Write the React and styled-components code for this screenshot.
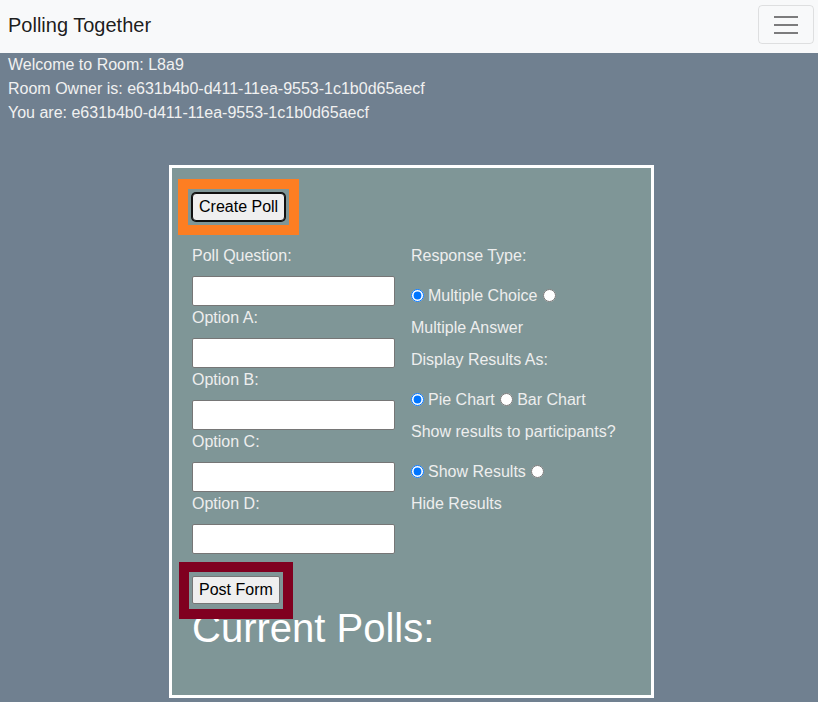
import React from 'react';
import styled, { createGlobalStyle } from 'styled-components';

const GlobalStyle = createGlobalStyle`
  body {
    margin: 0;
    background: #708090;
    font-family: "Liberation Sans", Arial, sans-serif;
    font-size: 16px;
  }
`;

const Navbar = styled.nav`
  display: flex;
  justify-content: space-between;
  align-items: flex-start;
  height: 53px;
  box-sizing: border-box;
  padding: 5px 4px 0 8px;
  background: #f8f9fa;
`;

const Brand = styled.div`
  font-size: 20px;
  line-height: 40px;
  color: rgba(0, 0, 0, 0.9);
`;

const Toggler = styled.button`
  display: flex;
  flex-direction: column;
  justify-content: center;
  gap: 6px;
  width: 56px;
  height: 39px;
  padding: 0 15px;
  background: transparent;
  border: 1px solid rgba(0, 0, 0, 0.1);
  border-radius: 4px;
`;

const TogglerBar = styled.span`
  display: block;
  height: 2px;
  background: rgba(0, 0, 0, 0.5);
`;

const RoomInfo = styled.div`
  padding: 0 8px;
  color: #f1f1f1;
  line-height: 24px;
`;

const Panel = styled.section`
  width: 485px;
  box-sizing: border-box;
  margin: 40px 0 0 169px;
  padding: 25px 20px 43px;
  background: #7f9697;
  border: 3px solid #ffffff;
`;

// the coloured frame is drawn over the page, it takes no room in the flow
const Button = styled.button`
  position: relative;
  display: block;
  font-family: "Liberation Sans", Arial, sans-serif;
  font-size: 16px;
  line-height: 24px;
  padding: 1px 6px;
  color: #000;
  background: #efefef;
  border: 1px solid ${p => (p.$focused ? '#101010' : '#767676')};
  border-radius: ${p => (p.$focused ? '4px' : '2px')};
  box-shadow: ${p => (p.$focused ? '0 0 0 1px #101010' : 'none')};

  &::after {
    content: '';
    position: absolute;
    inset: ${p => p.$frameInset || '-15px'};
    border: 10px solid ${p => p.$highlight};
    pointer-events: none;
  }
`;

const FormGrid = styled.div`
  display: grid;
  grid-template-columns: 203px 220px;
  column-gap: 16px;
  align-items: start;
  margin-top: 19px;
`;

const LeftColumn = styled.div`
  padding-top: 4px;
`;

const FieldLabel = styled.label`
  display: block;
  line-height: 24px;
  margin-bottom: 8px;
  color: #eeeeee;
`;

const TextInput = styled.input`
  display: block;
  width: 203px;
  height: 30px;
  box-sizing: border-box;
  border: 1px solid #767676;
  border-radius: 2px;
  background: #fff;
`;

const RightColumn = styled.div``;

const GroupTitle = styled.div`
  line-height: 32px;
  margin-bottom: 8px;
  color: #eeeeee;
`;

const RadioRow = styled.div`
  line-height: 32px;
  color: #eeeeee;
`;

const Radio = styled.input.attrs({ type: 'radio' })`
  width: 13px;
  height: 13px;
  margin: 0 4px 0 1px;
  vertical-align: -1px;

  &:first-child {
    margin-left: 0;
  }
`;

const Option = styled.label`
  white-space: nowrap;
`;

const PostRow = styled.div`
  margin-top: 22px;
`;

const PollsTitle = styled.h1`
  margin: 0;
  font-size: 40px;
  font-weight: 400;
  line-height: 48px;
  color: #ffffff;
`;

const fields = ['Option A:', 'Option B:', 'Option C:', 'Option D:'];

const RadioGroup = ({ name, options }) => (
  <RadioRow>
    {options.map((opt, i) => (
      <React.Fragment key={opt}>
        {i > 0 && ' '}
        <Radio name={name} defaultChecked={i === 0} />
        <wbr />
        <Option>{opt}</Option>
      </React.Fragment>
    ))}
  </RadioRow>
);

export default function App() {
  return (
    <>
      <GlobalStyle />
      <Navbar>
        <Brand>Polling Together</Brand>
        <Toggler aria-label="Toggle navigation">
          <TogglerBar />
          <TogglerBar />
          <TogglerBar />
        </Toggler>
      </Navbar>
      <RoomInfo>
        <div>Welcome to Room: L8a9</div>
        <div>Room Owner is: e631b4b0-d411-11ea-9553-1c1b0d65aecf</div>
        <div>You are: e631b4b0-d411-11ea-9553-1c1b0d65aecf</div>
      </RoomInfo>
      <Panel>
        <Button $focused $highlight="#fd7e22">Create Poll</Button>
        <FormGrid>
          <LeftColumn>
            <FieldLabel>Poll Question:</FieldLabel>
            <TextInput />
            {fields.map(f => (
              <React.Fragment key={f}>
                <FieldLabel>{f}</FieldLabel>
                <TextInput />
              </React.Fragment>
            ))}
          </LeftColumn>
          <RightColumn>
            <GroupTitle>Response Type:</GroupTitle>
            <RadioGroup name="type" options={['Multiple Choice', 'Multiple Answer']} />
            <GroupTitle>Display Results As:</GroupTitle>
            <RadioGroup name="display" options={['Pie Chart', 'Bar Chart']} />
            <GroupTitle>Show results to participants?</GroupTitle>
            <RadioGroup name="show" options={['Show Results', 'Hide Results']} />
          </RightColumn>
        </FormGrid>
        <PostRow>
          <Button $highlight="#800020" $frameInset="-15px -14px -16px -14px">Post Form</Button>
        </PostRow>
        <PollsTitle>Current Polls:</PollsTitle>
      </Panel>
    </>
  );
}
